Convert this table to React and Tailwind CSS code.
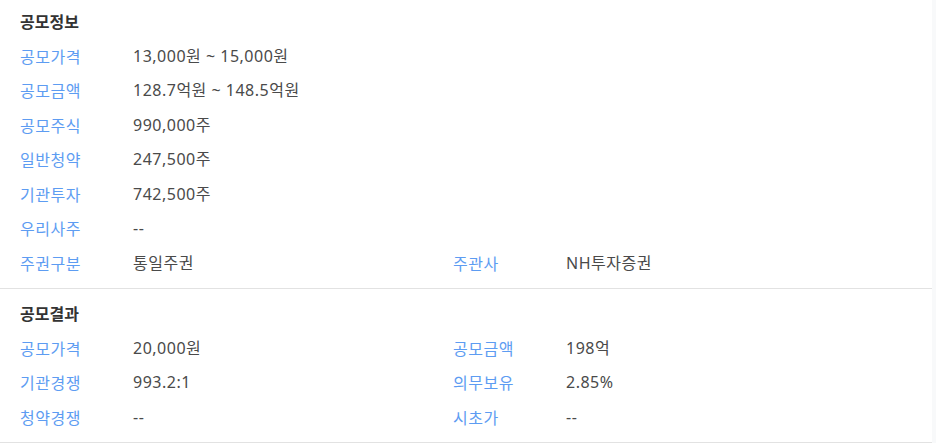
import React from "react";

const offerInfo = [
  ["공모가격", "13,000원 ~ 15,000원"],
  ["공모금액", "128.7억원 ~ 148.5억원"],
  ["공모주식", "990,000주"],
  ["일반청약", "247,500주"],
  ["기관투자", "742,500주"],
  ["우리사주", "--"],
];

const offerResult = [
  ["공모가격", "20,000원", "공모금액", "198억"],
  ["기관경쟁", "993.2:1", "의무보유", "2.85%"],
  ["청약경쟁", "--", "시초가", "--"],
];

const Cell = ({ label, value }) => (
  <div className="flex items-center w-[433px]">
    <span className="w-[113px] text-[#5d9cf2] tracking-[0.5px]">{label}</span>
    <span
      className="text-[#4a4a4a] tracking-[0.5px]"
      style={{ fontFamily: '"Noto Sans", "Noto Sans CJK KR", sans-serif' }}
    >
      {value}
    </span>
  </div>
);

const App = () => {
  return (
    <div
      className="flex w-[936px] h-[443px] bg-[#f8f9fa] text-[16px] overflow-hidden"
      style={{ fontFamily: '"Noto Sans CJK KR", "Noto Sans", sans-serif' }}
    >
      <div className="w-[932px] bg-white">
        <section className="pt-[4px] pb-[8px] pl-[20px] border-b border-[#e2e2e2]">
          <h3 className="h-[34.5px] flex items-center font-bold text-[#333]">
            공모정보
          </h3>
          {offerInfo.map(([label, value]) => (
            <div key={label} className="h-[34.5px] flex items-center">
              <Cell label={label} value={value} />
            </div>
          ))}
          <div className="h-[34.5px] flex items-center">
            <Cell label="주권구분" value="통일주권" />
            <Cell label="주관사" value="NH투자증권" />
          </div>
        </section>

        <section className="pt-[7px] pb-[8px] pl-[20px] border-b border-[#e2e2e2]">
          <h3 className="h-[34.5px] flex items-center font-bold text-[#333]">
            공모결과
          </h3>
          {offerResult.map(([l1, v1, l2, v2]) => (
            <div key={l1} className="h-[34.5px] flex items-center">
              <Cell label={l1} value={v1} />
              <Cell label={l2} value={v2} />
            </div>
          ))}
        </section>
      </div>
    </div>
  );
};

export default App;
